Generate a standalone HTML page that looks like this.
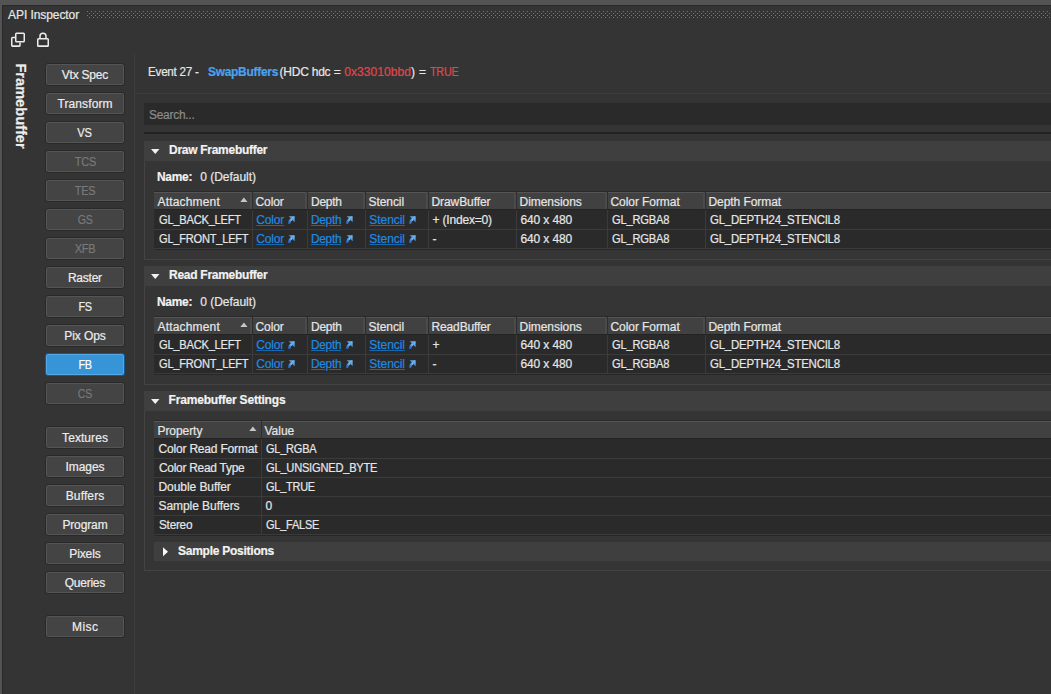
<!DOCTYPE html><html><head><meta charset="utf-8"><style>
html,body{margin:0;padding:0;}
body{width:1051px;height:694px;overflow:hidden;position:relative;background:#343434;font-family:"Liberation Sans",sans-serif;}
.r{position:absolute;}
.t{position:absolute;white-space:nowrap;-webkit-text-stroke:0.2px currentColor;}
.lk{text-decoration:underline;text-decoration-color:#1768ad;text-underline-offset:1px;}
.btn{position:absolute;left:45px;width:80px;height:23px;box-sizing:border-box;border:1px solid #292929;border-radius:3px;box-shadow:inset 0 0 0 1px #555;background:#444;color:#ececec;font-size:12px;line-height:21px;padding-top:1px;text-align:center;white-space:nowrap;-webkit-text-stroke:0.2px currentColor;}
.btn.dis{color:#787878;}
.btn.act{background:#3794d6;border-color:#0f5a98;box-shadow:inset 0 0 0 1px #55a8e6;color:#fff;}
</style></head><body>
<svg width="0" height="0" style="position:absolute"><defs><linearGradient id="ag" x1="1" y1="0" x2="0" y2="1"><stop offset="0" stop-color="#80ccff"/><stop offset="1" stop-color="#1a58bc"/></linearGradient></defs></svg>
<div class="r" style="left:0px;top:0px;width:1051px;height:5px;background:#535353;"></div>
<div class="r" style="left:0px;top:0px;width:2px;height:694px;background:#535353;"></div>
<div class="r" style="left:2px;top:5px;width:1049px;height:1px;background:#292929;"></div>
<div class="r" style="left:2px;top:5px;width:1px;height:689px;background:#292929;"></div>
<div class="t" style="left:8.10px;top:8.84px;font-size:12px;line-height:12px;color:#e8e8e8;letter-spacing:-0.083px;">API Inspector</div>
<svg class="r" style="left:87px;top:11px" width="964" height="8"><defs><pattern id="dp" width="4" height="4" patternUnits="userSpaceOnUse"><rect x="0" y="0" width="1" height="1" fill="#777"/><rect x="2" y="2" width="1" height="1" fill="#777"/></pattern></defs><rect width="964" height="8" fill="url(#dp)"/></svg>
<svg class="r" style="left:8px;top:30px" width="50" height="22" viewBox="8 30 50 22">
<path d="M15.5 37.5 H12.7 Q11.75 37.5 11.75 38.5 V45.5 Q11.75 46.2 12.75 46.2 H19 Q20 46.2 20 45.5 V42.5" fill="none" stroke="#ececec" stroke-width="1.5"/>
<rect x="12" y="45.5" width="7.6" height="1.5" fill="#ececec"/>
<rect x="15.75" y="33.25" width="8.5" height="8.5" rx="0.8" fill="none" stroke="#ececec" stroke-width="1.5"/>
<path d="M40 38.5 V36 Q40 33.25 43 33.25 Q46 33.25 46 36 V38.5" fill="none" stroke="#ececec" stroke-width="1.5"/>
<rect x="37.75" y="38.75" width="10.5" height="7.5" rx="0.8" fill="none" stroke="#ececec" stroke-width="1.5"/>
<rect x="38" y="45.5" width="10" height="1.5" fill="#ececec"/>
</svg>
<div class="t" style="left:20.2px;top:106.3px;font-size:14.6px;line-height:15px;font-weight:bold;color:#eeeeee;transform:translate(-50%,-50%) rotate(90deg);transform-origin:center;">Framebuffer</div>
<div class="btn" style="top:63px;"><span style="display:inline-block;letter-spacing:-0.200px;text-indent:-0.200px;">Vtx Spec</span></div>
<div class="btn" style="top:92px;"><span style="display:inline-block;letter-spacing:0.095px;text-indent:0.095px;">Transform</span></div>
<div class="btn" style="top:121px;"><span style="display:inline-block;letter-spacing:-0.250px;text-indent:-0.250px;transform:scaleX(0.9293);">VS</span></div>
<div class="btn dis" style="top:150px;"><span style="display:inline-block;letter-spacing:-0.250px;text-indent:-0.250px;transform:scaleX(0.9191);">TCS</span></div>
<div class="btn dis" style="top:179px;"><span style="display:inline-block;letter-spacing:-0.250px;text-indent:-0.250px;transform:scaleX(0.9131);">TES</span></div>
<div class="btn dis" style="top:208px;"><span style="display:inline-block;letter-spacing:-0.250px;text-indent:-0.250px;transform:scaleX(0.8808);">GS</span></div>
<div class="btn dis" style="top:237px;"><span style="display:inline-block;letter-spacing:-0.250px;text-indent:-0.250px;transform:scaleX(0.9219);">XFB</span></div>
<div class="btn" style="top:266px;"><span style="display:inline-block;letter-spacing:-0.240px;text-indent:-0.240px;">Raster</span></div>
<div class="btn" style="top:295px;"><span style="display:inline-block;letter-spacing:-0.250px;text-indent:-0.250px;transform:scaleX(0.9133);">FS</span></div>
<div class="btn" style="top:324px;"><span style="display:inline-block;letter-spacing:-0.100px;text-indent:-0.100px;">Pix Ops</span></div>
<div class="btn act" style="top:353px;"><span style="display:inline-block;letter-spacing:-0.250px;text-indent:-0.250px;transform:scaleX(0.9067);">FB</span></div>
<div class="btn dis" style="top:382px;"><span style="display:inline-block;letter-spacing:-0.250px;text-indent:-0.250px;transform:scaleX(0.8764);">CS</span></div>
<div class="btn" style="top:426px;"><span style="display:inline-block;letter-spacing:0.063px;text-indent:0.063px;">Textures</span></div>
<div class="btn" style="top:455px;"><span style="display:inline-block;letter-spacing:-0.052px;text-indent:-0.052px;">Images</span></div>
<div class="btn" style="top:484px;"><span style="display:inline-block;letter-spacing:0.133px;text-indent:0.133px;">Buffers</span></div>
<div class="btn" style="top:513px;"><span style="display:inline-block;letter-spacing:-0.127px;text-indent:-0.127px;">Program</span></div>
<div class="btn" style="top:542px;"><span style="display:inline-block;letter-spacing:-0.108px;text-indent:-0.108px;">Pixels</span></div>
<div class="btn" style="top:571px;"><span style="display:inline-block;letter-spacing:-0.233px;text-indent:-0.233px;">Queries</span></div>
<div class="btn" style="top:615px;"><span style="display:inline-block;letter-spacing:0.393px;text-indent:0.393px;">Misc</span></div>
<div class="r" style="left:134px;top:54px;width:1px;height:640px;background:#3d3d3d;"></div>
<div class="t" style="left:147.70px;top:65.84px;font-size:12px;line-height:12px;color:#e6e6e6;transform:scaleX(0.9720);transform-origin:0.00px 0;letter-spacing:-0.250px;">Event 27 -</div>
<div class="t" style="left:208.30px;top:65.84px;font-size:12px;line-height:12px;color:#4aa3f0;font-weight:bold;transform:scaleX(0.9927);transform-origin:0.00px 0;letter-spacing:-0.250px;">SwapBuffers</div>
<div class="t" style="left:279.60px;top:65.84px;font-size:12px;line-height:12px;color:#e6e6e6;letter-spacing:-0.240px;">(HDC hdc</div>
<div class="t" style="left:333.80px;top:65.84px;font-size:12px;line-height:12px;color:#e6e6e6;">=</div>
<div class="t" style="left:344.30px;top:65.84px;font-size:12px;line-height:12px;color:#e0474c;letter-spacing:0.067px;">0x33010bbd</div>
<div class="t" style="left:411.10px;top:65.84px;font-size:12px;line-height:12px;color:#e6e6e6;">)</div>
<div class="t" style="left:419.10px;top:65.84px;font-size:12px;line-height:12px;color:#e6e6e6;">=</div>
<div class="t" style="left:429.90px;top:65.84px;font-size:12px;line-height:12px;color:#e0474c;transform:scaleX(0.8968);transform-origin:0.00px 0;letter-spacing:-0.250px;">TRUE</div>
<div class="r" style="left:135px;top:93px;width:916px;height:1px;background:#3d3d3d;"></div>
<div class="r" style="left:144px;top:103px;width:907px;height:22px;background:#2a2a2a;"></div>
<div class="t" style="left:149.10px;top:108.84px;font-size:12px;line-height:12px;color:#8c8c8c;transform:scaleX(0.9935);transform-origin:0.00px 0;letter-spacing:-0.250px;">Search...</div>
<div class="r" style="left:144px;top:132px;width:907px;height:2px;background:#222222;"></div>
<div class="r" style="left:144px;top:141px;width:907px;height:20px;background:#3f3f3f;"></div>
<svg class="r" style="left:151px;top:149px" width="9" height="6"><path d="M0 0 H8.5 L4.25 5 Z" fill="#f0f0f0"/></svg>
<div class="t" style="left:168.60px;top:143.84px;font-size:12px;line-height:12px;color:#f2f2f2;font-weight:bold;transform:scaleX(0.9953);transform-origin:0.00px 0;letter-spacing:-0.250px;">Draw Framebuffer</div>
<div class="r" style="left:144px;top:161px;width:907px;height:99px;background:#353535;border-left:1px solid #434343;border-bottom:1px solid #434343;box-sizing:border-box;"></div>
<div class="t" style="left:157.40px;top:170.84px;font-size:12px;line-height:12px;color:#f2f2f2;font-weight:bold;transform:scaleX(0.9938);transform-origin:0.00px 0;letter-spacing:-0.250px;">Name:</div>
<div class="t" style="left:200.30px;top:170.84px;font-size:12px;line-height:12px;color:#e6e6e6;letter-spacing:-0.034px;">0 (Default)</div>
<div class="r" style="left:154px;top:191px;width:897px;height:1px;background:#2a2a2a;"></div>
<div class="r" style="left:154px;top:192px;width:897px;height:1px;background:#555555;"></div>
<div class="r" style="left:154px;top:193px;width:897px;height:16px;background:#414141;"></div>
<div class="r" style="left:154px;top:209px;width:897px;height:1px;background:#232323;"></div>
<div class="t" style="left:157.50px;top:195.84px;font-size:12px;line-height:12px;color:#e6e6e6;letter-spacing:0.176px;">Attachment</div>
<div class="r" style="left:250px;top:192px;width:2px;height:17px;background:#4b4b4b;"></div>
<div class="r" style="left:252px;top:192px;width:1px;height:17px;background:#2e2e2e;"></div>
<div class="t" style="left:255.50px;top:195.84px;font-size:12px;line-height:12px;color:#e6e6e6;letter-spacing:-0.095px;">Color</div>
<div class="r" style="left:305px;top:192px;width:2px;height:17px;background:#4b4b4b;"></div>
<div class="r" style="left:307px;top:192px;width:1px;height:17px;background:#2e2e2e;"></div>
<div class="t" style="left:310.50px;top:195.84px;font-size:12px;line-height:12px;color:#e6e6e6;transform:scaleX(0.9955);transform-origin:0.00px 0;letter-spacing:-0.250px;">Depth</div>
<div class="r" style="left:363px;top:192px;width:2px;height:17px;background:#4b4b4b;"></div>
<div class="r" style="left:365px;top:192px;width:1px;height:17px;background:#2e2e2e;"></div>
<div class="t" style="left:368.50px;top:195.84px;font-size:12px;line-height:12px;color:#e6e6e6;letter-spacing:-0.067px;">Stencil</div>
<div class="r" style="left:426px;top:192px;width:2px;height:17px;background:#4b4b4b;"></div>
<div class="r" style="left:428px;top:192px;width:1px;height:17px;background:#2e2e2e;"></div>
<div class="t" style="left:431.50px;top:195.84px;font-size:12px;line-height:12px;color:#e6e6e6;letter-spacing:-0.084px;">DrawBuffer</div>
<div class="r" style="left:514px;top:192px;width:2px;height:17px;background:#4b4b4b;"></div>
<div class="r" style="left:516px;top:192px;width:1px;height:17px;background:#2e2e2e;"></div>
<div class="t" style="left:519.50px;top:195.84px;font-size:12px;line-height:12px;color:#e6e6e6;letter-spacing:-0.038px;">Dimensions</div>
<div class="r" style="left:605px;top:192px;width:2px;height:17px;background:#4b4b4b;"></div>
<div class="r" style="left:607px;top:192px;width:1px;height:17px;background:#2e2e2e;"></div>
<div class="t" style="left:610.50px;top:195.84px;font-size:12px;line-height:12px;color:#e6e6e6;letter-spacing:-0.071px;">Color Format</div>
<div class="r" style="left:703px;top:192px;width:2px;height:17px;background:#4b4b4b;"></div>
<div class="r" style="left:705px;top:192px;width:1px;height:17px;background:#2e2e2e;"></div>
<div class="t" style="left:708.50px;top:195.84px;font-size:12px;line-height:12px;color:#e6e6e6;letter-spacing:-0.067px;">Depth Format</div>
<svg class="r" style="left:240.0px;top:197px" width="9" height="6"><path d="M0.3 5 L3.9 0.6 L7.5 5 Z" fill="#c6c6c6"/></svg>
<div class="r" style="left:154px;top:210px;width:897px;height:38px;background:#2a2a2a;"></div>
<div class="r" style="left:154px;top:229px;width:897px;height:1px;background:#3b3b3b;"></div>
<div class="r" style="left:154px;top:248px;width:897px;height:1px;background:#3b3b3b;"></div>
<div class="r" style="left:154px;top:249px;width:897px;height:1px;background:#272727;"></div>
<div class="r" style="left:252px;top:210px;width:1px;height:38px;background:#3b3b3b;"></div>
<div class="r" style="left:307px;top:210px;width:1px;height:38px;background:#3b3b3b;"></div>
<div class="r" style="left:365px;top:210px;width:1px;height:38px;background:#3b3b3b;"></div>
<div class="r" style="left:428px;top:210px;width:1px;height:38px;background:#3b3b3b;"></div>
<div class="r" style="left:516px;top:210px;width:1px;height:38px;background:#3b3b3b;"></div>
<div class="r" style="left:607px;top:210px;width:1px;height:38px;background:#3b3b3b;"></div>
<div class="r" style="left:705px;top:210px;width:1px;height:38px;background:#3b3b3b;"></div>
<div class="t" style="left:158.50px;top:213.84px;font-size:12px;line-height:12px;color:#e6e6e6;transform:scaleX(0.9258);transform-origin:0.00px 0;letter-spacing:-0.250px;">GL<span style="position:relative;top:-1px">_</span>BACK<span style="position:relative;top:-1px">_</span>LEFT</div>
<div class="t lk" style="left:256.30px;top:213.84px;font-size:12px;line-height:12px;color:#1f8ae2;letter-spacing:-0.170px;">Color</div>
<svg class="r" style="left:287.2px;top:215.8px" width="9" height="10"><path d="M1.6 0.3 H7.6 V6.3 Z" fill="url(#ag)"/><path d="M4.9 3 Q2.0 4.8 2.0 8.0" stroke="url(#ag)" stroke-width="2.3" fill="none"/></svg>
<div class="t lk" style="left:311.30px;top:213.84px;font-size:12px;line-height:12px;color:#1f8ae2;transform:scaleX(0.9826);transform-origin:0.00px 0;letter-spacing:-0.250px;">Depth</div>
<svg class="r" style="left:344.7px;top:215.8px" width="9" height="10"><path d="M1.6 0.3 H7.6 V6.3 Z" fill="url(#ag)"/><path d="M4.9 3 Q2.0 4.8 2.0 8.0" stroke="url(#ag)" stroke-width="2.3" fill="none"/></svg>
<div class="t lk" style="left:369.30px;top:213.84px;font-size:12px;line-height:12px;color:#1f8ae2;letter-spacing:-0.050px;">Stencil</div>
<svg class="r" style="left:407.9px;top:215.8px" width="9" height="10"><path d="M1.6 0.3 H7.6 V6.3 Z" fill="url(#ag)"/><path d="M4.9 3 Q2.0 4.8 2.0 8.0" stroke="url(#ag)" stroke-width="2.3" fill="none"/></svg>
<div class="t" style="left:432.50px;top:213.84px;font-size:12px;line-height:12px;color:#e6e6e6;letter-spacing:-0.182px;">+ (Index=0)</div>
<div class="t" style="left:520.50px;top:213.84px;font-size:12px;line-height:12px;color:#e6e6e6;letter-spacing:-0.122px;">640 x 480</div>
<div class="t" style="left:611.50px;top:213.84px;font-size:12px;line-height:12px;color:#e6e6e6;transform:scaleX(0.9317);transform-origin:0.00px 0;letter-spacing:-0.250px;">GL<span style="position:relative;top:-1px">_</span>RGBA8</div>
<div class="t" style="left:709.50px;top:213.84px;font-size:12px;line-height:12px;color:#e6e6e6;transform:scaleX(0.9548);transform-origin:0.00px 0;letter-spacing:-0.250px;">GL<span style="position:relative;top:-1px">_</span>DEPTH24<span style="position:relative;top:-1px">_</span>STENCIL8</div>
<div class="t" style="left:158.50px;top:232.84px;font-size:12px;line-height:12px;color:#e6e6e6;transform:scaleX(0.9231);transform-origin:0.00px 0;letter-spacing:-0.250px;">GL<span style="position:relative;top:-1px">_</span>FRONT<span style="position:relative;top:-1px">_</span>LEFT</div>
<div class="t lk" style="left:256.30px;top:232.84px;font-size:12px;line-height:12px;color:#1f8ae2;letter-spacing:-0.170px;">Color</div>
<svg class="r" style="left:287.2px;top:234.8px" width="9" height="10"><path d="M1.6 0.3 H7.6 V6.3 Z" fill="url(#ag)"/><path d="M4.9 3 Q2.0 4.8 2.0 8.0" stroke="url(#ag)" stroke-width="2.3" fill="none"/></svg>
<div class="t lk" style="left:311.30px;top:232.84px;font-size:12px;line-height:12px;color:#1f8ae2;transform:scaleX(0.9826);transform-origin:0.00px 0;letter-spacing:-0.250px;">Depth</div>
<svg class="r" style="left:344.7px;top:234.8px" width="9" height="10"><path d="M1.6 0.3 H7.6 V6.3 Z" fill="url(#ag)"/><path d="M4.9 3 Q2.0 4.8 2.0 8.0" stroke="url(#ag)" stroke-width="2.3" fill="none"/></svg>
<div class="t lk" style="left:369.30px;top:232.84px;font-size:12px;line-height:12px;color:#1f8ae2;letter-spacing:-0.050px;">Stencil</div>
<svg class="r" style="left:407.9px;top:234.8px" width="9" height="10"><path d="M1.6 0.3 H7.6 V6.3 Z" fill="url(#ag)"/><path d="M4.9 3 Q2.0 4.8 2.0 8.0" stroke="url(#ag)" stroke-width="2.3" fill="none"/></svg>
<div class="t" style="left:432.50px;top:232.84px;font-size:12px;line-height:12px;color:#e6e6e6;">-</div>
<div class="t" style="left:520.50px;top:232.84px;font-size:12px;line-height:12px;color:#e6e6e6;letter-spacing:-0.122px;">640 x 480</div>
<div class="t" style="left:611.50px;top:232.84px;font-size:12px;line-height:12px;color:#e6e6e6;transform:scaleX(0.9317);transform-origin:0.00px 0;letter-spacing:-0.250px;">GL<span style="position:relative;top:-1px">_</span>RGBA8</div>
<div class="t" style="left:709.50px;top:232.84px;font-size:12px;line-height:12px;color:#e6e6e6;transform:scaleX(0.9548);transform-origin:0.00px 0;letter-spacing:-0.250px;">GL<span style="position:relative;top:-1px">_</span>DEPTH24<span style="position:relative;top:-1px">_</span>STENCIL8</div>
<div class="r" style="left:144px;top:266px;width:907px;height:20px;background:#3f3f3f;"></div>
<svg class="r" style="left:151px;top:274px" width="9" height="6"><path d="M0 0 H8.5 L4.25 5 Z" fill="#f0f0f0"/></svg>
<div class="t" style="left:168.60px;top:268.84px;font-size:12px;line-height:12px;color:#f2f2f2;font-weight:bold;transform:scaleX(0.9973);transform-origin:0.00px 0;letter-spacing:-0.250px;">Read Framebuffer</div>
<div class="r" style="left:144px;top:286px;width:907px;height:99px;background:#353535;border-left:1px solid #434343;border-bottom:1px solid #434343;box-sizing:border-box;"></div>
<div class="t" style="left:157.40px;top:295.84px;font-size:12px;line-height:12px;color:#f2f2f2;font-weight:bold;transform:scaleX(0.9938);transform-origin:0.00px 0;letter-spacing:-0.250px;">Name:</div>
<div class="t" style="left:200.30px;top:295.84px;font-size:12px;line-height:12px;color:#e6e6e6;letter-spacing:-0.034px;">0 (Default)</div>
<div class="r" style="left:154px;top:316px;width:897px;height:1px;background:#2a2a2a;"></div>
<div class="r" style="left:154px;top:317px;width:897px;height:1px;background:#555555;"></div>
<div class="r" style="left:154px;top:318px;width:897px;height:16px;background:#414141;"></div>
<div class="r" style="left:154px;top:334px;width:897px;height:1px;background:#232323;"></div>
<div class="t" style="left:157.50px;top:320.84px;font-size:12px;line-height:12px;color:#e6e6e6;letter-spacing:0.176px;">Attachment</div>
<div class="r" style="left:250px;top:317px;width:2px;height:17px;background:#4b4b4b;"></div>
<div class="r" style="left:252px;top:317px;width:1px;height:17px;background:#2e2e2e;"></div>
<div class="t" style="left:255.50px;top:320.84px;font-size:12px;line-height:12px;color:#e6e6e6;letter-spacing:-0.095px;">Color</div>
<div class="r" style="left:305px;top:317px;width:2px;height:17px;background:#4b4b4b;"></div>
<div class="r" style="left:307px;top:317px;width:1px;height:17px;background:#2e2e2e;"></div>
<div class="t" style="left:310.50px;top:320.84px;font-size:12px;line-height:12px;color:#e6e6e6;transform:scaleX(0.9955);transform-origin:0.00px 0;letter-spacing:-0.250px;">Depth</div>
<div class="r" style="left:363px;top:317px;width:2px;height:17px;background:#4b4b4b;"></div>
<div class="r" style="left:365px;top:317px;width:1px;height:17px;background:#2e2e2e;"></div>
<div class="t" style="left:368.50px;top:320.84px;font-size:12px;line-height:12px;color:#e6e6e6;letter-spacing:-0.067px;">Stencil</div>
<div class="r" style="left:426px;top:317px;width:2px;height:17px;background:#4b4b4b;"></div>
<div class="r" style="left:428px;top:317px;width:1px;height:17px;background:#2e2e2e;"></div>
<div class="t" style="left:431.50px;top:320.84px;font-size:12px;line-height:12px;color:#e6e6e6;letter-spacing:-0.131px;">ReadBuffer</div>
<div class="r" style="left:514px;top:317px;width:2px;height:17px;background:#4b4b4b;"></div>
<div class="r" style="left:516px;top:317px;width:1px;height:17px;background:#2e2e2e;"></div>
<div class="t" style="left:519.50px;top:320.84px;font-size:12px;line-height:12px;color:#e6e6e6;letter-spacing:-0.038px;">Dimensions</div>
<div class="r" style="left:605px;top:317px;width:2px;height:17px;background:#4b4b4b;"></div>
<div class="r" style="left:607px;top:317px;width:1px;height:17px;background:#2e2e2e;"></div>
<div class="t" style="left:610.50px;top:320.84px;font-size:12px;line-height:12px;color:#e6e6e6;letter-spacing:-0.071px;">Color Format</div>
<div class="r" style="left:703px;top:317px;width:2px;height:17px;background:#4b4b4b;"></div>
<div class="r" style="left:705px;top:317px;width:1px;height:17px;background:#2e2e2e;"></div>
<div class="t" style="left:708.50px;top:320.84px;font-size:12px;line-height:12px;color:#e6e6e6;letter-spacing:-0.067px;">Depth Format</div>
<svg class="r" style="left:240.0px;top:322px" width="9" height="6"><path d="M0.3 5 L3.9 0.6 L7.5 5 Z" fill="#c6c6c6"/></svg>
<div class="r" style="left:154px;top:335px;width:897px;height:38px;background:#2a2a2a;"></div>
<div class="r" style="left:154px;top:354px;width:897px;height:1px;background:#3b3b3b;"></div>
<div class="r" style="left:154px;top:373px;width:897px;height:1px;background:#3b3b3b;"></div>
<div class="r" style="left:154px;top:374px;width:897px;height:1px;background:#272727;"></div>
<div class="r" style="left:252px;top:335px;width:1px;height:38px;background:#3b3b3b;"></div>
<div class="r" style="left:307px;top:335px;width:1px;height:38px;background:#3b3b3b;"></div>
<div class="r" style="left:365px;top:335px;width:1px;height:38px;background:#3b3b3b;"></div>
<div class="r" style="left:428px;top:335px;width:1px;height:38px;background:#3b3b3b;"></div>
<div class="r" style="left:516px;top:335px;width:1px;height:38px;background:#3b3b3b;"></div>
<div class="r" style="left:607px;top:335px;width:1px;height:38px;background:#3b3b3b;"></div>
<div class="r" style="left:705px;top:335px;width:1px;height:38px;background:#3b3b3b;"></div>
<div class="t" style="left:158.50px;top:338.84px;font-size:12px;line-height:12px;color:#e6e6e6;transform:scaleX(0.9258);transform-origin:0.00px 0;letter-spacing:-0.250px;">GL<span style="position:relative;top:-1px">_</span>BACK<span style="position:relative;top:-1px">_</span>LEFT</div>
<div class="t lk" style="left:256.30px;top:338.84px;font-size:12px;line-height:12px;color:#1f8ae2;letter-spacing:-0.170px;">Color</div>
<svg class="r" style="left:287.2px;top:340.8px" width="9" height="10"><path d="M1.6 0.3 H7.6 V6.3 Z" fill="url(#ag)"/><path d="M4.9 3 Q2.0 4.8 2.0 8.0" stroke="url(#ag)" stroke-width="2.3" fill="none"/></svg>
<div class="t lk" style="left:311.30px;top:338.84px;font-size:12px;line-height:12px;color:#1f8ae2;transform:scaleX(0.9826);transform-origin:0.00px 0;letter-spacing:-0.250px;">Depth</div>
<svg class="r" style="left:344.7px;top:340.8px" width="9" height="10"><path d="M1.6 0.3 H7.6 V6.3 Z" fill="url(#ag)"/><path d="M4.9 3 Q2.0 4.8 2.0 8.0" stroke="url(#ag)" stroke-width="2.3" fill="none"/></svg>
<div class="t lk" style="left:369.30px;top:338.84px;font-size:12px;line-height:12px;color:#1f8ae2;letter-spacing:-0.050px;">Stencil</div>
<svg class="r" style="left:407.9px;top:340.8px" width="9" height="10"><path d="M1.6 0.3 H7.6 V6.3 Z" fill="url(#ag)"/><path d="M4.9 3 Q2.0 4.8 2.0 8.0" stroke="url(#ag)" stroke-width="2.3" fill="none"/></svg>
<div class="t" style="left:432.50px;top:338.84px;font-size:12px;line-height:12px;color:#e6e6e6;">+</div>
<div class="t" style="left:520.50px;top:338.84px;font-size:12px;line-height:12px;color:#e6e6e6;letter-spacing:-0.122px;">640 x 480</div>
<div class="t" style="left:611.50px;top:338.84px;font-size:12px;line-height:12px;color:#e6e6e6;transform:scaleX(0.9317);transform-origin:0.00px 0;letter-spacing:-0.250px;">GL<span style="position:relative;top:-1px">_</span>RGBA8</div>
<div class="t" style="left:709.50px;top:338.84px;font-size:12px;line-height:12px;color:#e6e6e6;transform:scaleX(0.9548);transform-origin:0.00px 0;letter-spacing:-0.250px;">GL<span style="position:relative;top:-1px">_</span>DEPTH24<span style="position:relative;top:-1px">_</span>STENCIL8</div>
<div class="t" style="left:158.50px;top:357.84px;font-size:12px;line-height:12px;color:#e6e6e6;transform:scaleX(0.9231);transform-origin:0.00px 0;letter-spacing:-0.250px;">GL<span style="position:relative;top:-1px">_</span>FRONT<span style="position:relative;top:-1px">_</span>LEFT</div>
<div class="t lk" style="left:256.30px;top:357.84px;font-size:12px;line-height:12px;color:#1f8ae2;letter-spacing:-0.170px;">Color</div>
<svg class="r" style="left:287.2px;top:359.8px" width="9" height="10"><path d="M1.6 0.3 H7.6 V6.3 Z" fill="url(#ag)"/><path d="M4.9 3 Q2.0 4.8 2.0 8.0" stroke="url(#ag)" stroke-width="2.3" fill="none"/></svg>
<div class="t lk" style="left:311.30px;top:357.84px;font-size:12px;line-height:12px;color:#1f8ae2;transform:scaleX(0.9826);transform-origin:0.00px 0;letter-spacing:-0.250px;">Depth</div>
<svg class="r" style="left:344.7px;top:359.8px" width="9" height="10"><path d="M1.6 0.3 H7.6 V6.3 Z" fill="url(#ag)"/><path d="M4.9 3 Q2.0 4.8 2.0 8.0" stroke="url(#ag)" stroke-width="2.3" fill="none"/></svg>
<div class="t lk" style="left:369.30px;top:357.84px;font-size:12px;line-height:12px;color:#1f8ae2;letter-spacing:-0.050px;">Stencil</div>
<svg class="r" style="left:407.9px;top:359.8px" width="9" height="10"><path d="M1.6 0.3 H7.6 V6.3 Z" fill="url(#ag)"/><path d="M4.9 3 Q2.0 4.8 2.0 8.0" stroke="url(#ag)" stroke-width="2.3" fill="none"/></svg>
<div class="t" style="left:432.50px;top:357.84px;font-size:12px;line-height:12px;color:#e6e6e6;">-</div>
<div class="t" style="left:520.50px;top:357.84px;font-size:12px;line-height:12px;color:#e6e6e6;letter-spacing:-0.122px;">640 x 480</div>
<div class="t" style="left:611.50px;top:357.84px;font-size:12px;line-height:12px;color:#e6e6e6;transform:scaleX(0.9317);transform-origin:0.00px 0;letter-spacing:-0.250px;">GL<span style="position:relative;top:-1px">_</span>RGBA8</div>
<div class="t" style="left:709.50px;top:357.84px;font-size:12px;line-height:12px;color:#e6e6e6;transform:scaleX(0.9548);transform-origin:0.00px 0;letter-spacing:-0.250px;">GL<span style="position:relative;top:-1px">_</span>DEPTH24<span style="position:relative;top:-1px">_</span>STENCIL8</div>
<div class="r" style="left:144px;top:391px;width:907px;height:20px;background:#3f3f3f;"></div>
<svg class="r" style="left:151px;top:399px" width="9" height="6"><path d="M0 0 H8.5 L4.25 5 Z" fill="#f0f0f0"/></svg>
<div class="t" style="left:168.60px;top:393.84px;font-size:12px;line-height:12px;color:#f2f2f2;font-weight:bold;letter-spacing:-0.196px;">Framebuffer Settings</div>
<div class="r" style="left:144px;top:411px;width:907px;height:160px;background:#353535;border-left:1px solid #434343;border-bottom:1px solid #434343;box-sizing:border-box;"></div>
<div class="r" style="left:154px;top:420px;width:897px;height:1px;background:#2a2a2a;"></div>
<div class="r" style="left:154px;top:421px;width:897px;height:1px;background:#555555;"></div>
<div class="r" style="left:154px;top:422px;width:897px;height:16px;background:#414141;"></div>
<div class="r" style="left:154px;top:438px;width:897px;height:1px;background:#232323;"></div>
<div class="t" style="left:157.50px;top:424.84px;font-size:12px;line-height:12px;color:#e6e6e6;letter-spacing:-0.066px;">Property</div>
<div class="r" style="left:261px;top:421px;width:1px;height:17px;background:#2e2e2e;"></div>
<div class="t" style="left:264.50px;top:424.84px;font-size:12px;line-height:12px;color:#e6e6e6;letter-spacing:-0.015px;">Value</div>
<svg class="r" style="left:249.0px;top:426px" width="9" height="6"><path d="M0.3 5 L3.9 0.6 L7.5 5 Z" fill="#c6c6c6"/></svg>
<div class="r" style="left:154px;top:439px;width:897px;height:95px;background:#2a2a2a;"></div>
<div class="r" style="left:154px;top:458px;width:897px;height:1px;background:#3b3b3b;"></div>
<div class="r" style="left:154px;top:477px;width:897px;height:1px;background:#3b3b3b;"></div>
<div class="r" style="left:154px;top:496px;width:897px;height:1px;background:#3b3b3b;"></div>
<div class="r" style="left:154px;top:515px;width:897px;height:1px;background:#3b3b3b;"></div>
<div class="r" style="left:154px;top:534px;width:897px;height:1px;background:#3b3b3b;"></div>
<div class="r" style="left:154px;top:535px;width:897px;height:1px;background:#272727;"></div>
<div class="r" style="left:261px;top:439px;width:1px;height:95px;background:#3b3b3b;"></div>
<div class="t" style="left:158.50px;top:442.84px;font-size:12px;line-height:12px;color:#e6e6e6;letter-spacing:-0.188px;">Color Read Format</div>
<div class="t" style="left:265.50px;top:442.84px;font-size:12px;line-height:12px;color:#e6e6e6;transform:scaleX(0.9157);transform-origin:0.00px 0;letter-spacing:-0.250px;">GL<span style="position:relative;top:-1px">_</span>RGBA</div>
<div class="t" style="left:158.50px;top:461.84px;font-size:12px;line-height:12px;color:#e6e6e6;transform:scaleX(0.9921);transform-origin:0.00px 0;letter-spacing:-0.250px;">Color Read Type</div>
<div class="t" style="left:265.50px;top:461.84px;font-size:12px;line-height:12px;color:#e6e6e6;transform:scaleX(0.9266);transform-origin:0.00px 0;letter-spacing:-0.250px;">GL<span style="position:relative;top:-1px">_</span>UNSIGNED<span style="position:relative;top:-1px">_</span>BYTE</div>
<div class="t" style="left:158.50px;top:480.84px;font-size:12px;line-height:12px;color:#e6e6e6;letter-spacing:-0.067px;">Double Buffer</div>
<div class="t" style="left:265.50px;top:480.84px;font-size:12px;line-height:12px;color:#e6e6e6;transform:scaleX(0.9123);transform-origin:0.00px 0;letter-spacing:-0.250px;">GL<span style="position:relative;top:-1px">_</span>TRUE</div>
<div class="t" style="left:158.50px;top:499.84px;font-size:12px;line-height:12px;color:#e6e6e6;letter-spacing:-0.057px;">Sample Buffers</div>
<div class="t" style="left:265.50px;top:499.84px;font-size:12px;line-height:12px;color:#e6e6e6;">0</div>
<div class="t" style="left:158.50px;top:518.84px;font-size:12px;line-height:12px;color:#e6e6e6;transform:scaleX(0.9810);transform-origin:0.00px 0;letter-spacing:-0.250px;">Stereo</div>
<div class="t" style="left:265.50px;top:518.84px;font-size:12px;line-height:12px;color:#e6e6e6;transform:scaleX(0.9150);transform-origin:0.00px 0;letter-spacing:-0.250px;">GL<span style="position:relative;top:-1px">_</span>FALSE</div>
<div class="r" style="left:154px;top:542px;width:897px;height:19px;background:#3f3f3f;"></div>
<svg class="r" style="left:163px;top:547px" width="6" height="10"><path d="M0 0.3 V9.2 L5 4.75 Z" fill="#fafafa"/></svg>
<div class="t" style="left:178.40px;top:544.84px;font-size:12px;line-height:12px;color:#f2f2f2;font-weight:bold;transform:scaleX(0.9997);transform-origin:0.00px 0;letter-spacing:-0.250px;">Sample Positions</div>
</body></html>
